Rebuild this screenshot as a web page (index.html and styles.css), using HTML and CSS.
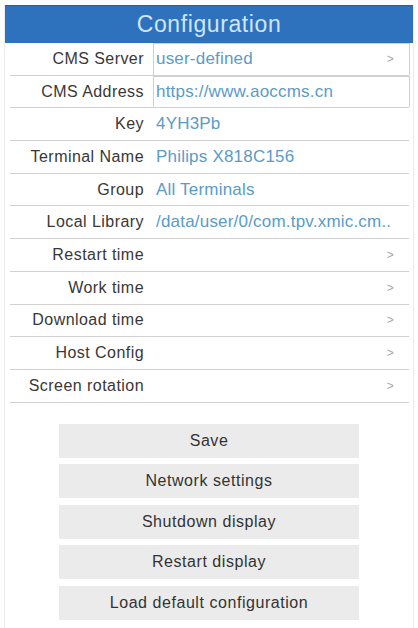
FILE: index.html
```html
<!DOCTYPE html>
<html>
<head>
<meta charset="utf-8">
<link rel="stylesheet" href="styles.css">
</head>
<body>
<div class="frame">
  <div class="header">Configuration</div>
  <div class="rows">
    <div class="row"><span class="label">CMS Server</span><div class="value box">user-defined<span class="chev">&gt;</span></div></div>
    <div class="row"><span class="label">CMS Address</span><div class="value box">https://www.aoccms.cn</div></div>
    <div class="row"><span class="label">Key</span><div class="value">4YH3Pb</div></div>
    <div class="row"><span class="label">Terminal Name</span><div class="value">Philips X818C156</div></div>
    <div class="row"><span class="label">Group</span><div class="value">All Terminals</div></div>
    <div class="row"><span class="label">Local Library</span><div class="value">/data/user/0/com.tpv.xmic.cm..</div></div>
    <div class="row"><span class="label">Restart time</span><div class="value"><span class="chev">&gt;</span></div></div>
    <div class="row"><span class="label">Work time</span><div class="value"><span class="chev">&gt;</span></div></div>
    <div class="row"><span class="label">Download time</span><div class="value"><span class="chev">&gt;</span></div></div>
    <div class="row"><span class="label">Host Config</span><div class="value"><span class="chev">&gt;</span></div></div>
    <div class="row"><span class="label">Screen rotation</span><div class="value"><span class="chev">&gt;</span></div></div>
  </div>
  <div class="buttons">
    <div class="btn">Save</div>
    <div class="btn">Network settings</div>
    <div class="btn">Shutdown display</div>
    <div class="btn">Restart display</div>
    <div class="btn">Load default configuration</div>
  </div>
</div>
</body>
</html>
```
FILE: styles.css
```css
html, body {
  margin: 0;
  padding: 0;
  background: #ffffff;
}
body {
  font-family: "Liberation Sans", Arial, sans-serif;
  width: 418px;
  height: 628px;
  overflow: hidden;
}
.frame {
  margin: 5px 4px 0 4px;
  height: 623px;
  border-left: 1px solid #ececec;
  border-right: 1px solid #ececec;
  box-sizing: border-box;
}
.header {
  height: 38px;
  background: #2e72bd;
  border-top: 1px solid #245f9f;
  box-sizing: border-box;
  color: #cde6fb;
  font-size: 23px;
  letter-spacing: 0.6px;
  text-align: center;
  line-height: 36px;
}
.rows {
  padding: 0 4px 0 5px;
}
.row {
  display: grid;
  grid-template-columns: 134px 1fr;
  column-gap: 11px;
  height: 32.7px;
  border-bottom: 1px solid #d2d2d2;
  box-sizing: border-box;
  align-items: center;
}
.label {
  text-align: right;
  font-size: 16px;
  letter-spacing: 0.45px;
  color: #383838;
  white-space: nowrap;
}
.value {
  display: flex;
  align-items: center;
  height: 100%;
  font-size: 17px;
  letter-spacing: 0.2px;
  color: #5b9bc8;
  white-space: nowrap;
  overflow: hidden;
  padding-left: 1px;
}
.value.box {
  border: 1px solid #cfcfcf;
  border-bottom: none;
  box-sizing: border-box;
  margin-left: -2px;
  padding-left: 2px;
  margin-right: -1px;
}
.chev {
  margin-left: auto;
  margin-right: 15px;
  font-size: 12px;
  color: #a8a8a8;
}
.buttons {
  display: flex;
  flex-direction: column;
  gap: 6.5px;
  padding: 21px 0 0 0;
  align-items: center;
}
.btn {
  width: 300px;
  height: 34px;
  background: #ebebeb;
  color: #333333;
  font-size: 16px;
  letter-spacing: 0.55px;
  display: flex;
  align-items: center;
  justify-content: center;
}
```
